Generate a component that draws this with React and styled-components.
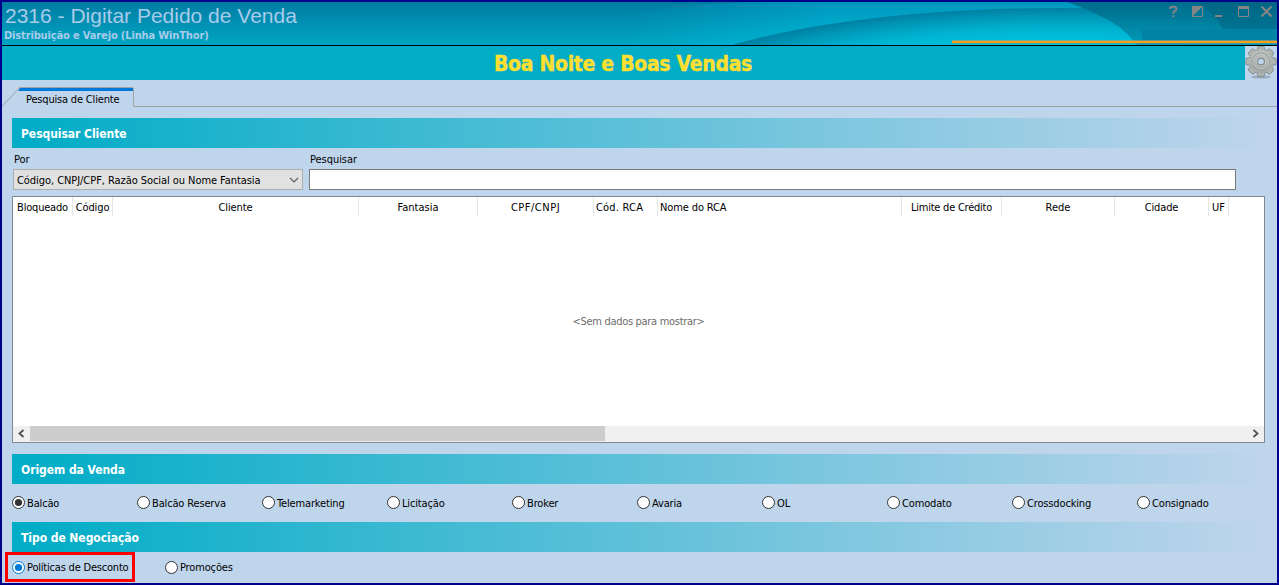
import React, { useState } from 'react'
import styled, { createGlobalStyle, css } from 'styled-components'

const GlobalStyle = createGlobalStyle`
    * {
        box-sizing: border-box;
    }
    body {
        margin: 0;
        overflow: hidden;
        font-family: "DejaVu Sans Condensed", "DejaVu Sans", sans-serif;
        font-size: 11px;
        letter-spacing: -0.05px;
        color: #000000;
    }
`

const Window = styled.div`
    width: 1279px;
    height: 585px;
    display: flex;
    flex-direction: column;
    border: 2px solid #00008b;
    background-color: #bfd5ec;
    overflow: hidden;
`

/* ---------- title bar ---------- */

const TitleBar = styled.header`
    height: 44px;
    flex: none;
    display: flex;
    justify-content: space-between;
    position: relative;
    border-bottom: 1px solid #000000;
    background: linear-gradient(#007ca3, #00a5c3);
`
const Artwork = styled.svg`
    position: absolute;
    top: 0;
    right: 0;
`
const Titles = styled.div`
    position: relative;
    padding-left: 2px;
    color: #a9cbea;
    white-space: nowrap;
`
const Title = styled.h1`
    margin: 0;
    padding-left: 1px;
    font: 21px/27px "Liberation Sans", Arial, sans-serif;
    letter-spacing: 0;
`
const Subtitle = styled.h2`
    margin: 0;
    padding-top: 1px;
    font-size: 11px;
    font-weight: bold;
    line-height: 12px;
    letter-spacing: -0.14px;
`
const WindowButtons = styled.svg`
    position: relative;
    flex: none;
`

/* ---------- greeting ---------- */

const Banner = styled.div`
    height: 34px;
    flex: none;
    display: flex;
`
const Greeting = styled.div`
    flex: 1;
    display: flex;
    align-items: center;
    justify-content: center;
    padding: 1px 1px 0 0;
    background-color: #00acc6;
    color: #ffdf2f;
    font-size: 21px;
    font-weight: bold;
    letter-spacing: -0.3px;
    -webkit-text-stroke: 0.4px #ffdf2f;
`

/* ---------- tabs ---------- */

const Tabs = styled.nav`
    height: 27px;
    flex: none;
    display: flex;
    align-items: flex-end;
    position: relative;
`
const TabShape = styled.svg`
    position: absolute;
    left: 0;
    top: 0;
`
const Tab = styled.span`
    position: relative;
    padding: 0 0 1px 24px;
    line-height: 13px;
    letter-spacing: -0.18px;
`

/* ---------- content ---------- */

const Content = styled.main`
    padding: 11px 12px 0 10px;
    display: flex;
    flex-direction: column;
`
const SectionTitle = styled.h3`
    height: 30px;
    margin: ${props => props.spaced ? '11px 0 0' : 0};
    padding: 1px 0 0 9px;
    display: flex;
    align-items: center;
    background: linear-gradient(to right, #00acc6, #bfd5ec);
    color: #ffffff;
    font-size: 12px;
    font-weight: bold;
`
const SearchRow = styled.div`
    display: flex;
    gap: 6px;
    height: 48px;
    padding: 5px 0 0 1px;
`
const Field = styled.label`
    width: ${props => props.width}px;
    display: flex;
    flex-direction: column;
    line-height: 14px;
    gap: 2px;
`
const FieldLabel = styled.span`
    padding-left: 1px;
`
const Select = styled.div`
    height: 21px;
    padding: 2px 3px 0 3px;
    display: flex;
    align-items: center;
    justify-content: space-between;
    border: 1px solid #adadad;
    background-color: #e1e1e1;
    white-space: nowrap;
    letter-spacing: -0.06px;
`
const Input = styled.input`
    height: 21px;
    padding: 0 3px;
    border: 1px solid #7a7a7a;
    outline: none;
    background-color: #ffffff;
    font: inherit;
`

const Grid = styled.div`
    height: 247px;
    display: flex;
    flex-direction: column;
    border: 1px solid #828790;
    background-color: #ffffff;
`
const GridHeader = styled.div`
    height: 19px;
    display: flex;
`
const Column = styled.div`
    width: ${props => props.width}px;
    flex: none;
    border-right: 1px solid #e5e5e5;
    padding-left: ${props => props.left ? 2 : 0}px;
    text-align: ${props => props.left ? 'left' : 'center'};
    line-height: 22px;
    white-space: nowrap;
    letter-spacing: ${props => props.spacing || 0}px;
`
const Empty = styled.div`
    flex: 1;
    display: flex;
    align-items: center;
    justify-content: center;
    color: #6d6d6d;
    letter-spacing: -0.3px;
`
const ScrollBar = styled.div`
    height: 16px;
    display: flex;
    justify-content: space-between;
    background-color: #f0f0f0;
`
const Thumb = styled.div`
    width: 575px;
    height: 15px;
    margin-right: auto;
    background-color: #cdcdcd;
`

const Options = styled.div`
    height: 38px;
    display: flex;
    align-items: center;
`
const Option = styled.label`
    width: ${props => props.width || 125}px;
    height: 24px;
    flex: none;
    display: flex;
    align-items: center;
    gap: 2px;
    white-space: nowrap;
    letter-spacing: -0.15px;
    ${props => props.highlighted && css`
        width: 130px;
        height: 30px;
        margin: 0 30px 0 -7px;
        padding-left: 4px;
        border: 3px solid #ff0000;
        letter-spacing: -0.2px;
    `}
`
const Negotiation = styled(Options)`
    height: 30px;
`
const RadioIcon = styled.svg`
    flex: none;
    margin-top: ${props => props.raised ? -1 : 0}px;
`

const columns = [
    { label: 'Bloqueado', width: 60, spacing: -0.2 },
    { label: 'Código', width: 40, spacing: -0.1 },
    { label: 'Cliente', width: 246, spacing: -0.1 },
    { label: 'Fantasia', width: 119 },
    { label: 'CPF/CNPJ', width: 116, spacing: 0.5 },
    { label: 'Cód. RCA', width: 64, left: true, spacing: 0.2 },
    { label: 'Nome do RCA', width: 244, left: true, spacing: -0.12 },
    { label: 'Limite de Crédito', width: 100, spacing: -0.24 },
    { label: 'Rede', width: 113 },
    { label: 'Cidade', width: 94, spacing: -0.15 },
    { label: 'UF', width: 20 },
]

const origins = [
    'Balcão', 'Balcão Reserva', 'Telemarketing', 'Licitação', 'Broker',
    'Avaria', 'OL', 'Comodato', 'Crossdocking', 'Consignado',
]

const Radio = ({ checked, color, raised }) => (
    <RadioIcon width="13" height="13" viewBox="0 0 13 13" raised={raised ? 1 : undefined}>
        <circle cx="6.5" cy="6.5" r="6" fill="#ffffff" stroke={color} />
        {checked && <circle cx="6.5" cy="6.5" r="3.6" fill={color} />}
    </RadioIcon>
)

const ScrollArrow = ({ direction }) => (
    <svg width="17" height="16" viewBox="0 0 17 16">
        <path
            d={direction === 'left' ? 'M10.5 4L6.5 7.5L10.5 11' : 'M6.5 4L10.5 7.5L6.5 11'}
            fill="none" stroke="#505050" strokeWidth="1.8"
        />
    </svg>
)

const teeth = [0, 45, 90, 135, 180, 225, 270, 315]

const Gear = () => (
    <svg width="32" height="34" viewBox="0 0 32 34">
        <defs>
            <linearGradient id="metal" x1="0" y1="0" x2="0" y2="1">
                <stop offset="0" stopColor="#bcc1bf" />
                <stop offset="1" stopColor="#a2a8a6" />
            </linearGradient>
        </defs>
        <ellipse cx="16" cy="31" rx="10" ry="1.6" fill="#9aabbd" />
        {teeth.map(angle => (
            <path
                key={angle} d="M11.6 6L13 0.4H19L20.4 6Z"
                transform={`rotate(${angle} 16 15.5)`} fill="#aeb4b1" stroke="#838b89" strokeWidth="0.9"
            />
        ))}
        <circle cx="16" cy="15.5" r="11.6" fill="url(#metal)" />
        <circle cx="16" cy="15.5" r="8.4" fill="none" stroke="#8f9795" strokeWidth="0.9" />
        <circle cx="16" cy="15.5" r="7.5" fill="none" stroke="#c8ccca" strokeWidth="0.8" />
        <circle cx="16" cy="15.5" r="4.4" fill="none" stroke="#d2d6d4" strokeWidth="0.8" />
        <circle cx="16" cy="15.5" r="3.4" fill="#bfd5ec" stroke="#7f8886" strokeWidth="1.1" />
    </svg>
)

const App = () => {
    const [origin, setOrigin] = useState('Balcão')
    const [negotiation, setNegotiation] = useState('Políticas de Desconto')

    return (
        <Window>
            <GlobalStyle />
            <TitleBar>
                <Artwork width="677" height="43" viewBox="600 2 677 43">
                    <defs>
                        <linearGradient id="glow" x1="0" y1="0" x2="0" y2="1">
                            <stop offset="0" stopColor="#0099c0" />
                            <stop offset="1" stopColor="#00bbd6" />
                        </linearGradient>
                        <linearGradient id="fade" gradientUnits="userSpaceOnUse" x1="625" y1="0" x2="830" y2="0">
                            <stop offset="0" stopColor="#ffffff" stopOpacity="0" />
                            <stop offset="1" stopColor="#ffffff" stopOpacity="0.9" />
                        </linearGradient>
                        <mask id="glowMask" maskUnits="userSpaceOnUse" x="600" y="2" width="677" height="43">
                            <rect x="600" y="2" width="677" height="43" fill="url(#fade)" />
                        </mask>
                        {/* dark along the crest of the wave, brighter towards the inside */}
                        <radialGradient
                            id="wave" gradientUnits="userSpaceOnUse" cx="0" cy="0" r="1"
                            gradientTransform="translate(1060 108) scale(422 100)"
                        >
                            <stop offset="0.64" stopColor="#00c4e0" />
                            <stop offset="0.8" stopColor="#00b2cf" />
                            <stop offset="0.92" stopColor="#0096b7" />
                            <stop offset="1" stopColor="#007fa2" />
                        </radialGradient>
                        <linearGradient id="shade" x1="0" y1="0" x2="0" y2="1">
                            <stop offset="0" stopColor="#006685" />
                            <stop offset="1" stopColor="#0096b4" />
                        </linearGradient>
                    </defs>
                    <path d="M600 45V20Q670 5 745 2H1277V45Z" fill="url(#glow)" mask="url(#glowMask)" />
                    <ellipse cx="1060" cy="108" rx="422" ry="100" fill="url(#wave)" />
                    <path d="M1067 2Q1088 9 1112 22Q1126 31 1137 45H1277V2Z" fill="url(#shade)" opacity="0.88" />
                    <path d="M1198 2Q1214 13 1223 29H1277V2Z" fill="#005d7a" opacity="0.45" />
                    <rect x="1142" y="29" width="135" height="12" fill="#0083a5" />
                    <rect x="952" y="40" width="325" height="1" fill="#a8a870" opacity="0.6" />
                    <rect x="952" y="41" width="325" height="2" fill="#f99d1c" />
                    <rect x="952" y="43" width="325" height="1" fill="#5a9a86" opacity="0.6" />
                </Artwork>
                <Titles>
                    <Title>2316 - Digitar Pedido de Venda</Title>
                    <Subtitle>Distribuição e Varejo (Linha WinThor)</Subtitle>
                </Titles>
                <WindowButtons width="117" height="24" viewBox="1160 2 117 24">
                    <path d="M1170 9V8L1171.5 6.8H1175L1176.3 8V9.7L1173.5 12.3V14M1173.5 15.2V17.2" fill="none" stroke="#858585" strokeWidth="2" />
                    <path d="M1192.5 6.5H1202.5V16.5H1192.5Z" fill="none" stroke="#858585" />
                    <path d="M1192 17V6H1203Z" fill="#858585" />
                    <rect x="1215" y="15" width="7" height="2" fill="#858585" />
                    <path d="M1238.5 7V16.5H1248.5V7" fill="none" stroke="#858585" />
                    <rect x="1238" y="6" width="11" height="3" fill="#858585" />
                    <path d="M1261.5 6.5L1271.5 16.5M1271.5 6.5L1261.5 16.5" stroke="#858585" strokeWidth="2" />
                </WindowButtons>
            </TitleBar>
            <Banner>
                <Greeting>Boa Noite e Boas Vendas</Greeting>
                <Gear />
            </Banner>
            <Tabs>
                <TabShape width="1275" height="27" viewBox="2 80 1275 27">
                    <path d="M2 106.5L19.5 87.5H132.5L133.5 88.5V106.5H1277" fill="none" stroke="#a0a0a0" />
                    <path d="M18 91L20 88H133V91Z" fill="#0078d7" />
                </TabShape>
                <Tab>Pesquisa de Cliente</Tab>
            </Tabs>
            <Content>
                <SectionTitle>Pesquisar Cliente</SectionTitle>
                <SearchRow>
                    <Field width={290}>
                        <FieldLabel>Por</FieldLabel>
                        <Select>
                            Código, CNPJ/CPF, Razão Social ou Nome Fantasia
                            <svg width="10" height="7" viewBox="0 0 10 7">
                                <path d="M1 1L5 5L9 1" fill="none" stroke="#606060" strokeWidth="1.2" />
                            </svg>
                        </Select>
                    </Field>
                    <Field width={927}>
                        <FieldLabel>Pesquisar</FieldLabel>
                        <Input />
                    </Field>
                </SearchRow>
                <Grid>
                    <GridHeader>
                        {columns.map(column => (
                            <Column
                                key={column.label} width={column.width}
                                left={column.left} spacing={column.spacing}
                            >
                                {column.label}
                            </Column>
                        ))}
                    </GridHeader>
                    <Empty>&lt;Sem dados para mostrar&gt;</Empty>
                    <ScrollBar>
                        <ScrollArrow direction="left" />
                        <Thumb />
                        <ScrollArrow direction="right" />
                    </ScrollBar>
                </Grid>
                <SectionTitle spaced>Origem da Venda</SectionTitle>
                <Options>
                    {origins.map(name => (
                        <Option key={name} onClick={() => setOrigin(name)}>
                            <Radio checked={origin === name} color="#333333" raised />
                            {name}
                        </Option>
                    ))}
                </Options>
                <SectionTitle>Tipo de Negociação</SectionTitle>
                <Negotiation>
                    <Option highlighted onClick={() => setNegotiation('Políticas de Desconto')}>
                        <Radio checked={negotiation === 'Políticas de Desconto'} color="#0078d7" />
                        Políticas de Desconto
                    </Option>
                    <Option onClick={() => setNegotiation('Promoções')}>
                        <Radio checked={negotiation === 'Promoções'} color="#333333" />
                        Promoções
                    </Option>
                </Negotiation>
            </Content>
        </Window>
    )
}

export default App
